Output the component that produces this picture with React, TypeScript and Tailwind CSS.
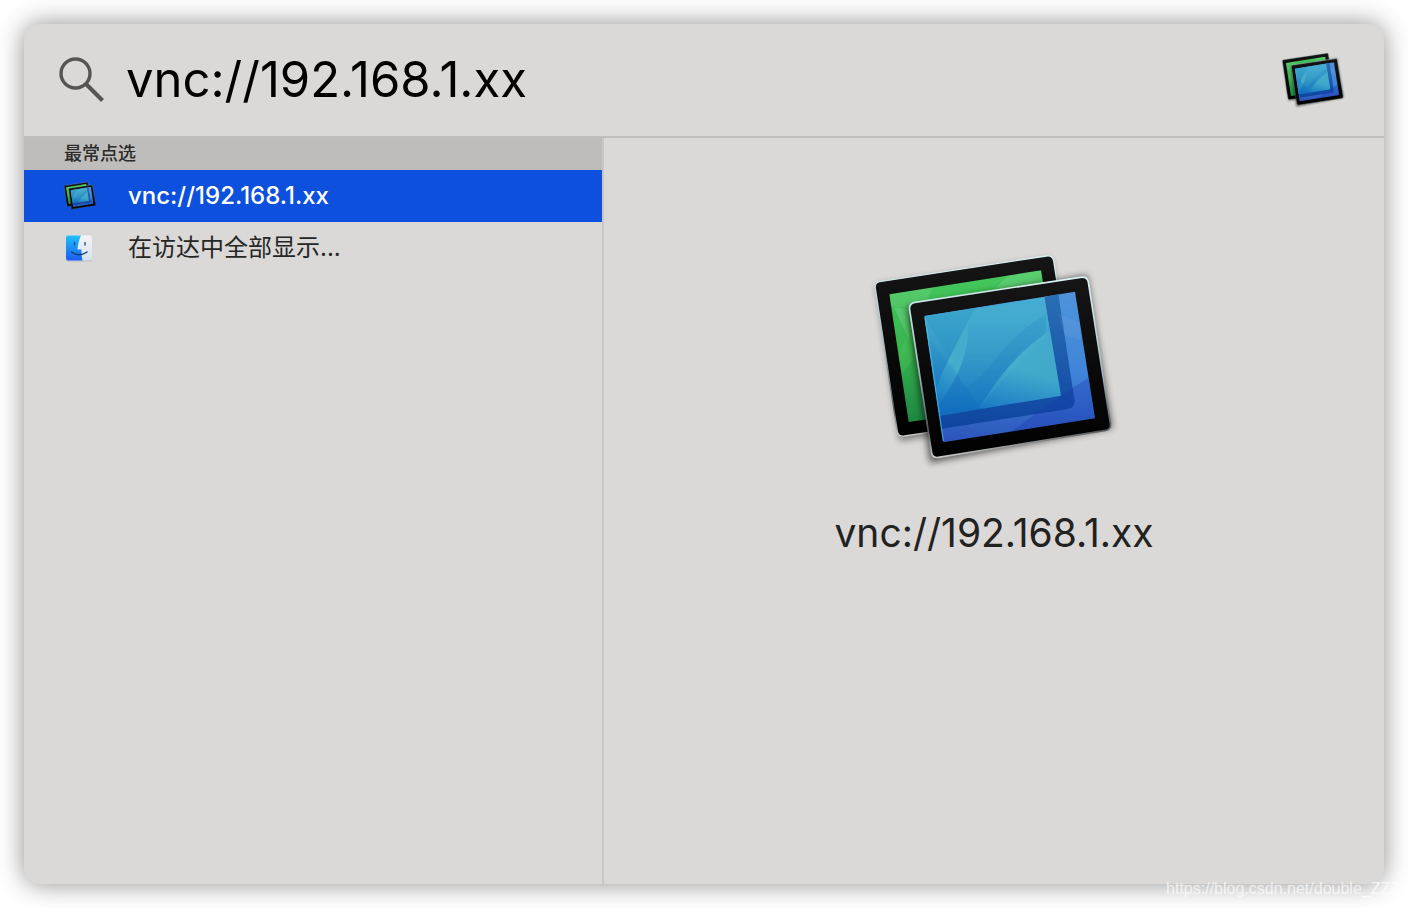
import { useId, useState } from "react";

function ScreensIcon({ className }: { className: string }) {
  const id = useId().replace(/[^a-zA-Z0-9]/g, "");
  const ref = (name: string) => `url(#${id}${name})`;
  return (
    <svg viewBox="0 0 810 720" className={className} aria-hidden="true">
      <defs>
        <linearGradient id={`${id}green`} x1="0" y1="0" x2="0" y2="1">
          <stop offset="0" stopColor="#45c95c" />
          <stop offset="0.5" stopColor="#38b751" />
          <stop offset="1" stopColor="#1c8440" />
        </linearGradient>
        <linearGradient id={`${id}blue`} x1="0" y1="0" x2="0" y2="1">
          <stop offset="0" stopColor="#4ab2d4" />
          <stop offset="0.45" stopColor="#3599c8" />
          <stop offset="0.9" stopColor="#1470bf" />
        </linearGradient>
        <linearGradient id={`${id}edge`} x1="0" y1="0" x2="0" y2="1">
          <stop offset="0" stopColor="#4f94db" />
          <stop offset="0.55" stopColor="#3f84d8" />
          <stop offset="1" stopColor="#2b50b8" />
        </linearGradient>
        <linearGradient id={`${id}band`} x1="0" y1="0" x2="0" y2="1">
          <stop offset="0" stopColor="#2a70b4" />
          <stop offset="0.6" stopColor="#1a56ab" />
          <stop offset="1" stopColor="#0e459f" />
        </linearGradient>
        <linearGradient id={`${id}leaf`} x1="0.6" y1="0" x2="0.3" y2="1">
          <stop offset="0" stopColor="#5cc6cf" stopOpacity="0.25" />
          <stop offset="0.5" stopColor="#55c5cf" stopOpacity="0.55" />
          <stop offset="1" stopColor="#45b5dc" stopOpacity="0.15" />
        </linearGradient>
        <linearGradient id={`${id}rim`} x1="0" y1="0" x2="0" y2="1">
          <stop offset="0" stopColor="#d9f3f4" />
          <stop offset="0.5" stopColor="#a9bcc2" />
          <stop offset="0.85" stopColor="#55585a" />
          <stop offset="1" stopColor="#c9c9c9" />
        </linearGradient>
        <linearGradient id={`${id}frame`} x1="0" y1="0" x2="0" y2="1">
          <stop offset="0" stopColor="#151515" />
          <stop offset="1" stopColor="#000000" />
        </linearGradient>
        <clipPath id={`${id}clipg`}>
          <path d="M91 163 546 91 610 480 149 546Z" />
        </clipPath>
        <clipPath id={`${id}clipb`}>
          <path d="M196 228 648 155 708 535 253 607Z" />
        </clipPath>
        <clipPath id={`${id}clipi`}>
          <path d="M196 228 556 172 606 467 241 528Z" />
        </clipPath>
        <filter id={`${id}blur`} x="-20%" y="-20%" width="140%" height="140%">
          <feGaussianBlur stdDeviation="11" />
        </filter>
      </defs>

      <path d="M52 136 575 56 654 514 122 602Z" fill="#000" opacity="0.45" filter={ref("blur")} />
      <path
        d="M62 125 562 48Q580 45 584 62L652 498Q654 512 640 514L136 588Q118 590 115 574L49 146Q46 128 62 125Z"
        fill={ref("frame")} stroke={ref("rim")} strokeWidth="4"
      />
      <g clipPath={ref("clipg")}>
        <path d="M80 80H620V560H80Z" fill={ref("green")} />
        <path d="M80 165 222 142Q205 180 192 210L80 195Z" fill="#fff" opacity="0.1" />
        <path d="M105 202 150 207V300Q125 245 105 202Z" fill="#fff" opacity="0.14" />
        <path d="M408 145 455 100 560 85V150Z" fill="#fff" opacity="0.12" />
        <path d="M117 350Q140 300 160 240V360L130 400Z" fill="#8bea6f" opacity="0.12" />
      </g>
      <path d="M144 200 684 106 760 564 213 668Z" fill="#000" opacity="0.6" filter={ref("blur")} />
      <path
        d="M168 187 664 112Q684 109 688 126L754 550Q757 568 740 571L238 652Q221 655 218 639L152 210Q149 190 168 187Z"
        fill={ref("frame")} stroke={ref("rim")} strokeWidth="5"
      />
      <g clipPath={ref("clipb")}>
        <path d="M180 140H720V620H180Z" fill={ref("edge")} />
        <path d="M555 160 597 155 646 478Q650 503 626 507L245 567 235 520 600 465Z" fill={ref("band")} />
        <path d="M708 400 606 467 450 580 440 620 720 600Z" fill="#1731b0" opacity="0.28" />
        <path d="M597 220 665 250V300L615 285Z" fill="#fff" opacity="0.05" />
      </g>
      <g clipPath={ref("clipi")}>
        <path d="M180 150H620V550H180Z" fill={ref("blue")} />
        <path d="M350 200H600V250Q470 370 360 505L285 390Q325 320 330 240Z" fill="#57c3d8" opacity="0.1" />
        <path d="M330 238C324 300 330 370 241 492L233 445C250 390 290 320 330 238Z" fill={ref("leaf")} />
        <path d="M560 280Q440 365 362 503L430 520 620 470V250Z" fill={ref("leaf")} />
        <path d="M560 225Q470 275 400 370Q350 430 318 445L362 503Q440 365 560 280Z" fill="#086cb5" opacity="0.14" />
        <path d="M196 280 285 390 370 510 230 540Z" fill="#086cc5" opacity="0.12" />
        <path d="M196 228 350 204 270 350Z" fill="#1186bd" opacity="0.16" />
      </g>
      <path d="M198 232 253 603" stroke="#4ac2f4" strokeWidth="4" opacity="0.7" />
    </svg>
  );
}

function FinderIcon({ className }: { className: string }) {
  return (
    <svg viewBox="0 0 28 28" className={className} aria-hidden="true">
      <defs>
        <linearGradient id="finderLeft" x1="0" y1="0" x2="0" y2="1">
          <stop offset="0" stopColor="#1fc0fb" />
          <stop offset="1" stopColor="#1b5df2" />
        </linearGradient>
        <linearGradient id="finderRight" x1="0" y1="0" x2="0" y2="1">
          <stop offset="0" stopColor="#f5f4f5" />
          <stop offset="1" stopColor="#d3e2f4" />
        </linearGradient>
      </defs>
      <rect x="2" y="2.500" width="26" height="25" rx="2" fill="#000" opacity="0.14" />
      <rect x="2" y="1.500" width="26" height="25" rx="2" fill="url(#finderRight)" />
      <path d="M4 1.500H17C15 5.500 14 10.500 13.500 15.500H17.500C17.500 19 17.500 23 18.500 26.500H4Q2 26.500 2 24.500V3.500Q2 1.500 4 1.500Z" fill="url(#finderLeft)" />
      <path d="M10.500 8.500V11M21 8.500V11" stroke="#20476f" strokeWidth="1.300" strokeLinecap="round" />
      <path d="M7.500 18Q15 23.500 23 18" fill="none" stroke="#173c68" strokeWidth="1.400" strokeLinecap="round" />
    </svg>
  );
}

export default function App() {
  const [query, setQuery] = useState("vnc://192.168.1.xx");
  return (
    <div className="relative flex min-h-screen flex-col overflow-hidden bg-white p-6 font-['Inter','Noto_Sans_CJK_SC',sans-serif]">
      <main className="flex flex-1 flex-col overflow-hidden rounded-2xl bg-[#dad9d7] shadow-[0_0_26px_rgba(0,0,0,0.45)]">
        <header className="flex h-28 shrink-0 items-center pr-9 pl-8">
          <label htmlFor="query" className="shrink-0">
            <svg viewBox="0 0 50 50" className="size-[50px]" role="img" aria-label="Search">
              <circle cx="19.500" cy="18.500" r="14.500" fill="none" stroke="#555554" strokeWidth="3.400" />
              <path d="M30 29 46.500 45.500" stroke="#555554" strokeWidth="4" />
            </svg>
          </label>
          <input
            id="query"
            type="text"
            value={query}
            onChange={(e) => setQuery(e.target.value)}
            className="ml-5 h-16 min-w-0 flex-1 bg-transparent text-[49px] text-black outline-none"
          />
          <ScreensIcon className="h-[62px] w-[70px] shrink-0" />
        </header>
        <div className="flex flex-1 border-t-2 border-[#bfbebc]">
          <section className="w-[580px] shrink-0 border-r-2 border-[#c8c7c6]">
            <h2 className="h-8 bg-[#bebdbb] pl-10 text-lg leading-8 font-medium text-[#2b2b2a]">最常点选</h2>
            <ul className="text-2xl">
              <li>
                <button type="button" className="flex h-13 w-full items-center gap-7 bg-[#0c50dd] pl-[38px] text-left font-medium text-white">
                  <ScreensIcon className="h-8 w-9 shrink-0" />
                  <span className="pl-0.5">vnc://192.168.1.xx</span>
                </button>
              </li>
              <li>
                <button type="button" className="flex h-13 w-full items-center gap-9 pl-10 text-left text-[#262625]">
                  <FinderIcon className="size-7 shrink-0" />
                  <span>在访达中全部显示...</span>
                </button>
              </li>
            </ul>
          </section>
          <section className="flex min-w-0 flex-1 flex-col items-center pt-[102px]">
            <ScreensIcon className="h-60 w-[270px]" />
            <h1 className="mt-[29px] text-[39px] leading-12 text-[#222221]">vnc://192.168.1.xx</h1>
          </section>
        </div>
      </main>
      <a
        href="https://blog.csdn.net/double_ZZZ"
        className="absolute right-2 bottom-[7px] font-['Liberation_Sans',sans-serif] text-base leading-6 text-white/70"
      >
        https://blog.csdn.net/double_ZZZ
      </a>
    </div>
  );
}
